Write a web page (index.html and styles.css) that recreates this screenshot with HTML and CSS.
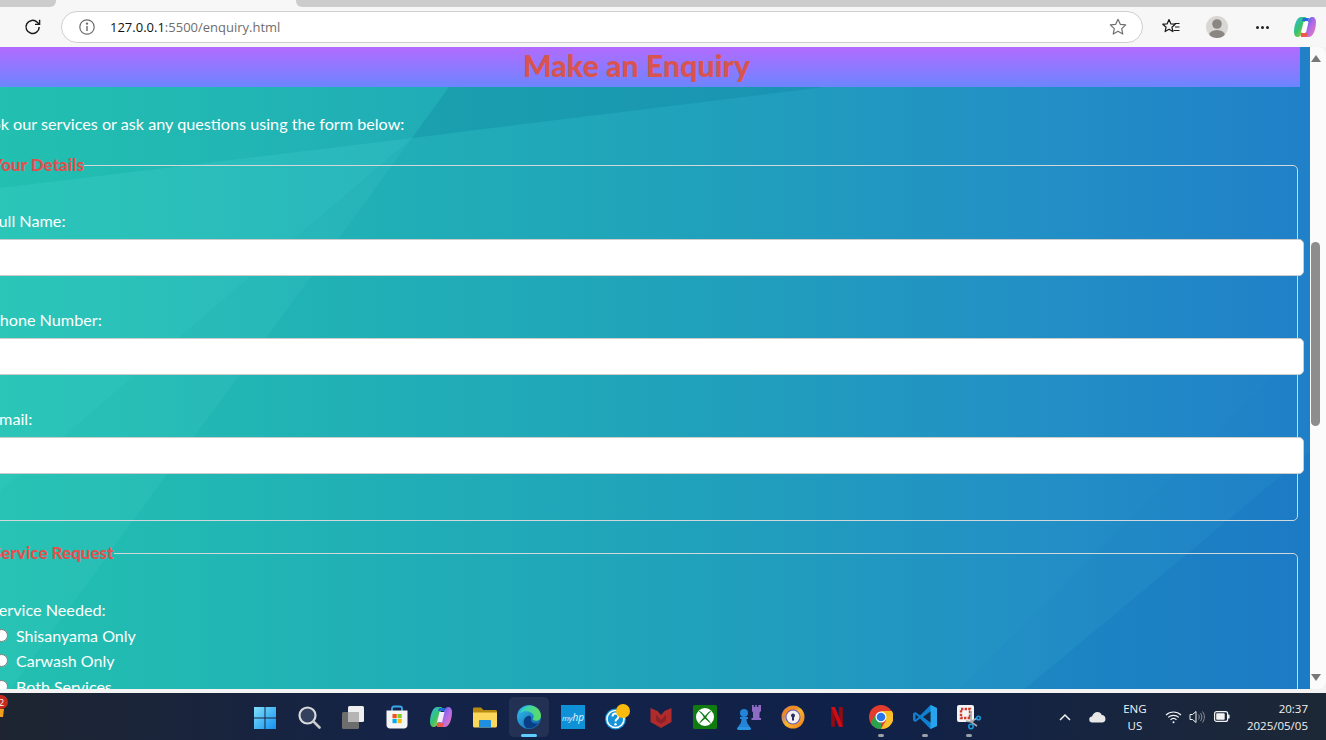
FILE: index.html
```html
<!DOCTYPE html>
<html lang="en">
<head>
    <meta charset="UTF-8">
    <meta name="viewport" content="width=device-width, initial-scale=1.0">
    <title>Make an Enquiry</title>
    <link rel="stylesheet" href="styles.css">
</head>
<body>
    <!-- browser top -->
    <div class="tabstrip">
        <div class="tab-grey tab-left"></div>
        <div class="tab-active"></div>
        <div class="tab-grey tab-right"></div>
    </div>
    <div class="toolbar">
        <svg class="reload" width="20" height="20" viewBox="0 0 20 20" fill="none" stroke="#1a1a1a" stroke-width="1.5"><path d="M16.2 10a6.6 6.6 0 1 1-2-4.8l2 2"/><path d="M16.6 2.8v4.6h-4.6" stroke-width="1.4"/></svg>
        <div class="address">
            <svg class="info" width="18" height="18" viewBox="0 0 18 18" fill="none" stroke="#6b6b6b" stroke-width="1.2"><circle cx="9" cy="9" r="7.2"/><path d="M9 8v5" stroke-width="1.4"/><circle cx="9" cy="5.6" r=".6" fill="#6b6b6b"/></svg>
            <span class="url"><b>127.0.0.1</b>:5500/enquiry.html</span>
            <svg class="star" width="20" height="20" viewBox="0 0 20 20" fill="none" stroke="#6f6f6f" stroke-width="1.2" stroke-linejoin="round"><path d="M10 2.3l2.3 5 5.4.6-4 3.7 1.1 5.4-4.8-2.7-4.8 2.7 1.1-5.4-4-3.7 5.4-.6z"/></svg>
        </div>
        <svg class="fav" width="20" height="20" viewBox="0 0 20 20" fill="none" stroke="#1a1a1a" stroke-width="1.2" stroke-linejoin="round"><path d="M8 2.500l1.800 4.300 4.400.4-3.300 3 1 4.400L8 12.300l-3.900 2.300 1-4.400-3.300-3 4.400-.4z"/><path d="M13.500 6.500h5M14 10h4.500M12.500 13.500h6"/></svg>
        <svg class="avatar" width="24" height="24" viewBox="0 0 24 24"><defs><clipPath id="av"><circle cx="12" cy="12" r="11"/></clipPath></defs><circle cx="12" cy="12" r="11" fill="#d9d7d3"/><g clip-path="url(#av)" fill="#8a8783"><circle cx="12" cy="9" r="4.8"/><ellipse cx="12" cy="20.5" rx="8" ry="5.6"/></g></svg>
        <div class="dots"><i></i><i></i><i></i></div>
        <svg class="copilot" width="24" height="24" viewBox="0 0 24 24">
            <defs>
                <linearGradient id="cpA" x1="0" y1="0" x2="1" y2="1"><stop offset="0" stop-color="#2fb6f0"/><stop offset=".5" stop-color="#36c46a"/><stop offset="1" stop-color="#f7c325"/></linearGradient>
                <linearGradient id="cpB" x1="0" y1="0" x2="1" y2="1"><stop offset="0" stop-color="#1f5ee0"/><stop offset=".5" stop-color="#b06ae8"/><stop offset="1" stop-color="#f27ab0"/></linearGradient>
            </defs>
            <path d="M8 2h5l-4 16c-.4 2-2 4-4.400 4C2.400 22 1 20 1 17c0-5 2-15 7-15z" fill="url(#cpA)"/>
            <path d="M16 22h-5l4-16c.5-2 2-4 4.400-4C21.600 2 23 4 23 7c0 5-2 15-7 15z" fill="url(#cpB)"/>
            <path d="M10.500 7h5l-2.500 10.500H8z" fill="#fff"/>
            <path d="M8 18h7l-1 3c-.5 1-1 1-2 1H8z" fill="#f0584a"/>
            <path d="M10 3h6l-1 3H9z" fill="#1f6be0"/>
        </svg>
    </div>

    <div class="viewport">
        <div class="page">
            <svg class="backdrop" viewBox="0 47 1310 642" preserveAspectRatio="none">
                <defs>
                    <linearGradient id="base" x1="0" y1="0" x2="1" y2="0">
                        <stop offset="0" stop-color="#22c0b0"/>
                        <stop offset=".5" stop-color="#20a3ba"/>
                        <stop offset=".78" stop-color="#2290c5"/>
                        <stop offset="1" stop-color="#2080c8"/>
                    </linearGradient>
                </defs>
                <rect x="0" y="47" width="1310" height="642" fill="url(#base)"/>
                <polygon points="449,87 824,87 412,138" fill="#0b7f99" fill-opacity=".28"/>
                <polygon points="0,188 412,138 0,491" fill="#80ffff" fill-opacity=".1"/>
                <polygon points="412,138 0,491 0,703 17,680" fill="#80ffff" fill-opacity=".06"/>
                <polygon points="1310,452 1310,689 1025,689" fill="#0f6dbd" fill-opacity=".25"/>
                <polygon points="1310,340 1310,452 1025,689 960,689" fill="#1b7dc0" fill-opacity=".1"/>
            </svg>
            <div class="content">
                <h1 class="title">Make an Enquiry</h1>
                <p class="intro">Book our services or ask any questions using the form below:</p>
                <form>
                    <fieldset class="details">
                        <legend>Your Details</legend>
                        <label for="name">Full Name:</label>
                        <input type="text" id="name">
                        <label for="phone">Phone Number:</label>
                        <input type="text" id="phone">
                        <label for="email">Email:</label>
                        <input type="text" id="email">
                    </fieldset>
                    <fieldset class="service">
                        <legend>Service Request</legend>
                        <div class="service-label">Service Needed:</div>
                        <label class="radio"><input type="radio" name="svc"> Shisanyama Only</label>
                        <label class="radio"><input type="radio" name="svc"> Carwash Only</label>
                        <label class="radio"><input type="radio" name="svc"> Both Services</label>
                    </fieldset>
                </form>
            </div>
        </div>
        <div class="scrollbar">
            <div class="arrow-up"></div>
            <div class="thumb"></div>
            <div class="arrow-down"></div>
        </div>
    </div>

    <!-- windows taskbar -->
    <div class="taskbar">
        <svg class="clipped-app" width="10" height="30" viewBox="0 0 10 30"><path d="M0 16h4l-1 8H0z" fill="#f0a020"/><circle cx="1" cy="9" r="7" fill="#c42b1c"/><text x="-1" y="12.500" font-size="9" fill="#fff" font-family="Open Sans, sans-serif">2</text></svg>
        <div class="apps">
            <div class="app"><svg width="24" height="24" viewBox="0 0 24 24"><defs><linearGradient id="win" x1="0" y1="0" x2="1" y2="1"><stop offset="0" stop-color="#7fe0fb"/><stop offset="1" stop-color="#1390f0"/></linearGradient></defs><path d="M1 2h10.500v10.500H1zM12.500 2H23v10.500H12.500zM1 13.500h10.500V24H1zM12.500 13.500H23V24H12.500z" fill="url(#win)"/></svg></div>
            <div class="app"><svg width="24" height="24" viewBox="0 0 24 24" fill="none"><circle cx="10.500" cy="10.500" r="8" fill="#33415f" stroke="#d7d9dc" stroke-width="2.200"/><path d="M16.500 16.500l6 6" stroke="#c8cacc" stroke-width="2.600" stroke-linecap="round"/></svg></div>
            <div class="app"><svg width="24" height="24" viewBox="0 0 24 24"><rect x="7" y="1" width="16" height="16" rx="1.500" fill="#efefef"/><rect x="1" y="7" width="17" height="17" rx="1.500" fill="#6d6d6d"/><rect x="7" y="7" width="11" height="10" fill="#b5b5b5"/></svg></div>
            <div class="app"><svg width="24" height="24" viewBox="0 0 24 24"><path d="M7 6V3.500C7 2 8 1.500 9 1.500h6c1 0 2 .5 2 2V6" fill="none" stroke="#38a8e8" stroke-width="1.800"/><path d="M1.500 5.500h21V20c0 2-1.500 3.500-3.500 3.500H5c-2 0-3.500-1.500-3.500-3.500z" fill="#f5f5f5"/><rect x="7.500" y="9" width="4.200" height="4.200" fill="#f1511b"/><rect x="12.500" y="9" width="4.200" height="4.200" fill="#80cc28"/><rect x="7.500" y="14" width="4.200" height="4.200" fill="#00adef"/><rect x="12.500" y="14" width="4.200" height="4.200" fill="#fbbc09"/></svg></div>
            <div class="app"><svg width="24" height="24" viewBox="0 0 24 24">
                <path d="M8 2h5l-4 16c-.4 2-2 4-4.400 4C2.400 22 1 20 1 17c0-5 2-15 7-15z" fill="url(#cpA)"/>
                <path d="M16 22h-5l4-16c.5-2 2-4 4.400-4C21.600 2 23 4 23 7c0 5-2 15-7 15z" fill="url(#cpB)"/>
                <path d="M10.500 7h5l-2.500 10.500H8z" fill="#f4e9fb"/>
                <path d="M8 18h7l-1 3c-.5 1-1 1-2 1H8z" fill="#f0584a"/>
                <path d="M10 3h6l-1 3H9z" fill="#1f6be0"/>
            </svg></div>
            <div class="app"><svg width="24" height="24" viewBox="0 0 24 24"><path d="M0 4c0-.8.6-1.500 1.500-1.500h6.500l2.500 2.500h12c.8 0 1.500.7 1.500 1.500V10H0z" fill="#b98a10"/><path d="M0 7.500h24V21c0 .8-.7 1.500-1.500 1.500h-21C.7 22.500 0 21.800 0 21z" fill="#fbd75b"/><path d="M7 15h10c.6 0 1 .4 1 1v6.500H6V16c0-.6.4-1 1-1z" fill="#1f8fe0"/></svg></div>
            <div class="app app-active"><svg width="24" height="24" viewBox="0 0 24 24"><defs><linearGradient id="edA" x1="0" y1="0" x2="1" y2="1"><stop offset="0" stop-color="#35c1f1"/><stop offset="1" stop-color="#0c59a4"/></linearGradient><linearGradient id="edB" x1="0" y1="0" x2="1" y2="0"><stop offset="0" stop-color="#2fd0c8"/><stop offset="1" stop-color="#5fdc60"/></linearGradient></defs><circle cx="12" cy="12" r="12" fill="url(#edA)"/><path d="M3 8C5 2 11 0 15 .8c5 1 9 5 9 10 0 3-2 5-5 5-2 0-3-1-3-2 1-1 1-3 0-4.500C14 6.500 9 4.500 3 8z" fill="url(#edB)"/><path d="M11 11c3-1 4 2 3 4 1 4 5 4 7 3-3 5-8 6-11 5C7 22 6 17 7 15c.5-2 2-3.500 4-4z" fill="#0a3e86"/></svg><span class="running"></span></div>
            <div class="app"><div class="myhp"><span>my<b>hp</b></span></div></div>
            <div class="app"><svg width="26" height="26" viewBox="0 0 26 26" fill="none"><circle cx="11.500" cy="15" r="10.500" fill="#1593d8"/><circle cx="11.500" cy="15" r="8.500" stroke="#fff" stroke-width="1.600"/><path d="M8.500 12.500c0-4 6-4 6 0 0 2.500-3 2.500-3 5" stroke="#fff" stroke-width="2"/><circle cx="11.500" cy="20.200" r="1.200" fill="#fff"/><circle cx="19" cy="7" r="7" fill="#fcba0c"/></svg></div>
            <div class="app"><svg width="24" height="24" viewBox="0 0 24 24"><path d="M1.500 3l7 3 3.500 4 3.500-4 7-3v14L12 23 1.500 17z" fill="#b02c2c"/><path d="M7 9.500l5 5.500 5-5.500v6L12 19l-5-3.500z" fill="#8a2228"/></svg></div>
            <div class="app"><svg width="24" height="24" viewBox="0 0 24 24"><rect width="24" height="24" rx="1.500" fill="#107c10"/><circle cx="12" cy="12" r="9" fill="#fff"/><path d="M5 5.500c3 .8 5 3 7 5.500 2-2.500 4-4.700 7-5.500-2.600 2-5 5-5.800 7 2 2 4.300 4.500 5.300 7-2-2-4.500-4.500-6.500-5.800-2 1.300-4.500 3.800-6.500 5.800 1-2.500 3.300-5 5.300-7C10 10.500 7.600 7.500 5 5.500z" fill="#107c10"/></svg></div>
            <div class="app"><svg width="24" height="26" viewBox="0 0 24 26"><path d="M15 1h1.800v2h1.500V1h1.600v2h1.500V1H24v6l-1.500 1.500V14H24v2h-9.500v-2H16V8.500L15 7z" fill="#8f6cc4"/><circle cx="7" cy="9" r="4" fill="#2384d8"/><path d="M3 13h8v2H9.500c0 3 1 5 3 7v1.500h-11V22c2-2 3-4 3-7H3z" fill="#2384d8"/><rect x="0" y="23" width="14" height="3" rx="1.500" fill="#2b95e5"/></svg></div>
            <div class="app"><svg width="24" height="24" viewBox="0 0 24 24"><defs><linearGradient id="av1" x1="0" y1="0" x2="1" y2="1"><stop offset="0" stop-color="#7b4fc0"/><stop offset=".5" stop-color="#f7b52c"/><stop offset="1" stop-color="#f07a1a"/></linearGradient></defs><circle cx="12" cy="12" r="11.500" fill="url(#av1)"/><path d="M1 12C1 6 6 1 12 1c3 0 5 1 7 3-3-1-6 0-8 2-3 2-5 3-10 6z" fill="#f28a1c"/><circle cx="12" cy="12" r="7.500" fill="#6a58b8"/><circle cx="12" cy="12" r="6.500" fill="#f4f1ee"/><circle cx="12" cy="10.500" r="2" fill="#2a2c62"/><rect x="11" y="11" width="2" height="4.500" fill="#2a2c62"/></svg></div>
            <div class="app"><svg width="12" height="20" viewBox="0 0 14 24"><path d="M0 0h4.500v24L0 23.500z" fill="#8e0c14"/><path d="M9.500 0H14v23.500L9.500 24z" fill="#8e0c14"/><path d="M0 0h4.500L14 23.500 9.500 24z" fill="#cf0c16"/></svg></div>
            <div class="app"><svg width="24" height="24" viewBox="0 0 24 24"><circle cx="12" cy="12" r="12" fill="#e33b2e"/><path d="M12 24a12 12 0 0 1-10.400-6L7 9l5 9h0z" fill="#2ba24c"/><path d="M12 24l5.200-9L12 6h10.900A12 12 0 0 1 12 24z" fill="#fbc02d"/><path d="M12 6h10.900l-5.700 10z" fill="#f3bd1e"/><circle cx="12" cy="12" r="5.500" fill="#fff"/><circle cx="12" cy="12" r="4.300" fill="#2a76e8"/></svg><span class="pinned"></span></div>
            <div class="app"><svg width="24" height="24" viewBox="0 0 24 24"><path d="M17.500 0L24 3v18l-6.500 3L7 13.500 2.500 17 0 15.500V8.500L2.500 7 7 10.500z" fill="#0f7fd0"/><path d="M17.500 0L24 3v18l-6.500 3z" fill="#26a5ee"/><path d="M17.500 6.500v11L10 12z" fill="#16243f"/><path d="M2.500 9.200v5.600L5.500 12z" fill="#16243f"/></svg><span class="pinned"></span></div>
            <div class="app"><svg width="26" height="26" viewBox="0 0 26 26" fill="none"><rect x="1" y="1" width="17" height="17" rx="2" fill="#f4f4f4"/><path d="M5 5h9v9H5z" stroke="#d13b2e" stroke-width="2.400" stroke-dasharray="2.400 1.200"/><path d="M15 7v11l6 4M21 14l-6 4-5-1" stroke="#a8a8a8" stroke-width="1.600"/><circle cx="22.500" cy="14" r="1.800" stroke="#1c9be0" stroke-width="1.500"/><circle cx="15" cy="22.500" r="2.200" stroke="#1c9be0" stroke-width="1.500"/></svg><span class="pinned"></span></div>
        </div>
        <div class="tray">
            <svg class="tray-up" width="12" height="8" viewBox="0 0 12 8" fill="none" stroke="#f2f2f2" stroke-width="1.500"><path d="M1 7l5-5 5 5"/></svg>
            <svg class="tray-cloud" width="17" height="12" viewBox="0 0 17 12"><path d="M3.500 11.500a3 3 0 0 1-.5-6C3.800 3 6 1 8.500 1c2 0 3.500 1 4.300 3a3.800 3.800 0 0 1 .7 7.500z" fill="#e8e8e8"/></svg>
            <div class="lang"><div>ENG</div><div>US</div></div>
            <svg class="tray-wifi" width="17" height="14" viewBox="0 0 17 14" fill="none" stroke="#f2f2f2" stroke-width="1.200"><path d="M1 5c4.200-4 10.800-4 15 0M3.200 7.400c3-2.800 7.600-2.800 10.600 0M5.500 9.800c1.700-1.500 4.300-1.500 6 0"/><circle cx="8.500" cy="12.200" r="1" fill="#f2f2f2" stroke="none"/></svg>
            <svg class="tray-vol" width="17" height="14" viewBox="0 0 17 14" fill="none" stroke="#f2f2f2" stroke-width="1"><path d="M1 4.500h2.500L7 1.500v11l-3.500-3H1z"/><path d="M9.500 4.500c1 1.500 1 3.500 0 5M11.500 3c1.800 2.500 1.800 5.500 0 8M13.500 1.500c2.500 3.500 2.500 7.500 0 11" stroke="#8a8f98"/></svg>
            <svg class="tray-bat" width="16" height="11" viewBox="0 0 16 11" fill="none"><rect x=".6" y=".6" width="13" height="9.800" rx="2" stroke="#f2f2f2" stroke-width="1.200"/><rect x="2.200" y="2.200" width="8.500" height="6.600" rx=".8" fill="#f2f2f2"/><rect x="14" y="3.500" width="1.600" height="4" rx=".6" fill="#f2f2f2"/></svg>
            <div class="clock"><div>20:37</div><div>2025/05/05</div></div>
        </div>
    </div>
</body>
</html>
```

FILE: styles.css
```css
html, body {
    margin: 0;
    padding: 0;
    height: 740px;
    overflow: hidden;
}

body {
    display: flex;
    flex-direction: column;
    font-family: "Lato", sans-serif;
    background-color: #f3f3f3;
}

/* browser top */
.tabstrip {
    display: flex;
    height: 7px;
    background-color: #f7f7f7;
}

.tab-grey {
    background-color: #cccccc;
}

.tab-left {
    width: 56px;
    border-bottom-right-radius: 6px;
}

.tab-active {
    width: 240px;
}

.tab-right {
    flex: 1;
    border-bottom-left-radius: 6px;
}

.toolbar {
    display: flex;
    align-items: center;
    height: 40px;
    background-color: #f7f7f7;
}

.reload {
    margin-left: 23px;
}

.address {
    display: flex;
    align-items: center;
    box-sizing: border-box;
    width: 1082px;
    height: 32px;
    margin-left: 18px;
    background-color: #fff;
    border: 1px solid #cfcfcf;
    border-radius: 16px;
}

.info {
    margin-left: 16px;
}

.url {
    margin-left: 14px;
    font-family: "Open Sans", sans-serif;
    font-size: 13px;
    color: #6e6e6e;
}

.url b {
    font-weight: 400;
    color: #111;
}

.star {
    margin-left: auto;
    margin-right: 14px;
}

.fav {
    margin-left: 18px;
}

.avatar {
    margin-left: 24px;
}

.dots {
    display: flex;
    gap: 2px;
    margin-left: 27px;
}

.dots i {
    width: 3px;
    height: 3px;
    background-color: #222;
    border-radius: 50%;
}

.copilot {
    margin-left: 24px;
}

/* page area */
.viewport {
    display: flex;
    height: 646px;
    box-sizing: border-box;
    padding-bottom: 4px;
    background-color: #f3f3f3;
}

.page {
    position: relative;
    width: 1310px;
    overflow: hidden;
    color: #fff;
}

.backdrop {
    position: absolute;
    top: 0;
    left: 0;
    width: 1310px;
    height: 642px;
}

.content {
    position: relative;
    width: 1327px;
    margin-left: -27px;
}

.title {
    height: 40px;
    margin: 0;
    font-size: 30.300px;
    font-weight: 900;
    line-height: 37px;
    text-align: center;
    color: #d9534f;
    background: linear-gradient(to bottom, #b26bff, #6c85ff);
}

.intro {
    margin: 0 0 0 -1px;
    padding-top: 26px;
    font-size: 16.200px;
    line-height: 22px;
}

form {
    margin-top: 20px;
}

fieldset {
    margin: 0 2px 0 3px;
    padding: 15px;
    border: 1px solid #d0d8dc;
    border-radius: 5px;
}

legend {
    padding: 0;
    font-size: 17px;
    font-weight: 900;
    line-height: 20px;
    color: #e2504e;
}

.details {
    height: 366px;
    box-sizing: border-box;
    padding-top: 37px;
}

.details label {
    display: block;
    height: 18px;
    margin-bottom: 9px;
    margin-left: -2px;
    font-size: 16.200px;
    line-height: 18px;
}

.details input {
    display: block;
    width: 100%;
    height: 35px;
    box-sizing: content-box;
    padding: 0 10px;
    margin-bottom: 35px;
    background-color: #fff;
    border: 1px solid #ccc;
    border-radius: 5px;
}

.service {
    margin-top: 22px;
    padding-top: 37px;
}

.service-label {
    height: 23px;
    margin-left: -2px;
    font-size: 16.200px;
    line-height: 20px;
}

.radio {
    display: flex;
    align-items: center;
    gap: 8px;
    height: 25.300px;
    font-size: 16px;
}

.radio input {
    width: 13px;
    height: 13px;
    margin: 0 0 0 3px;
}

/* scrollbar */
.scrollbar {
    display: flex;
    flex-direction: column;
    align-items: center;
    box-sizing: border-box;
    width: 16px;
    padding-right: 5px;
    background-color: #fbfbfb;
    border-top-right-radius: 8px;
    border-bottom-right-radius: 8px;
}

.arrow-up {
    width: 0;
    height: 0;
    margin-top: 8px;
    border-left: 5px solid transparent;
    border-right: 5px solid transparent;
    border-bottom: 7px solid #787878;
}

.thumb {
    flex: none;
    width: 9px;
    height: 184px;
    margin-top: 180px;
    background-color: #8d8d8d;
    border-radius: 5px;
}

.arrow-down {
    width: 0;
    height: 0;
    margin-top: auto;
    margin-bottom: 8px;
    border-left: 5px solid transparent;
    border-right: 5px solid transparent;
    border-top: 7px solid #787878;
}

/* taskbar */
.taskbar {
    position: relative;
    display: flex;
    align-items: center;
    height: 47px;
    background: linear-gradient(to right, #1e2531 0, #142347 30%, #102149 65%, #1d2836 100%);
}

.clipped-app {
    position: absolute;
    left: 0;
    top: 0;
}

.apps {
    display: flex;
    margin-left: 243px;
}

.app {
    position: relative;
    display: flex;
    align-items: center;
    justify-content: center;
    width: 44px;
    height: 47px;
}

.app-active::before {
    content: "";
    position: absolute;
    top: 4px;
    left: 2px;
    width: 40px;
    height: 40px;
    background-color: rgba(255, 255, 255, 0.07);
    border-radius: 5px;
}

.app svg {
    position: relative;
}

.running {
    position: absolute;
    left: 14px;
    bottom: 3px;
    width: 16px;
    height: 3px;
    background-color: #60cdff;
    border-radius: 2px;
}

.pinned {
    position: absolute;
    left: 19px;
    bottom: 3px;
    width: 6px;
    height: 3px;
    background-color: #9a9fa8;
    border-radius: 2px;
}

.myhp {
    display: flex;
    align-items: center;
    justify-content: center;
    width: 24px;
    height: 24px;
    background-color: #0f91d8;
    font-family: "Open Sans", sans-serif;
    font-size: 8px;
    font-style: italic;
    color: #e8f6ff;
}

.myhp b {
    font-size: 10px;
    font-weight: 400;
}

.tray {
    display: flex;
    align-items: center;
    margin-left: auto;
    padding-right: 18px;
    font-family: "Open Sans", sans-serif;
    font-size: 11.500px;
    color: #f2f2f2;
}

.tray-cloud {
    margin-left: 18px;
}

.lang {
    width: 40px;
    margin-left: 9px;
    line-height: 17px;
    text-align: center;
}

.tray-wifi {
    margin-left: 10px;
}

.tray-vol {
    margin-left: 7px;
}

.tray-bat {
    margin-left: 8px;
}

.clock {
    margin-left: 17px;
    line-height: 17px;
    text-align: right;
}
```
